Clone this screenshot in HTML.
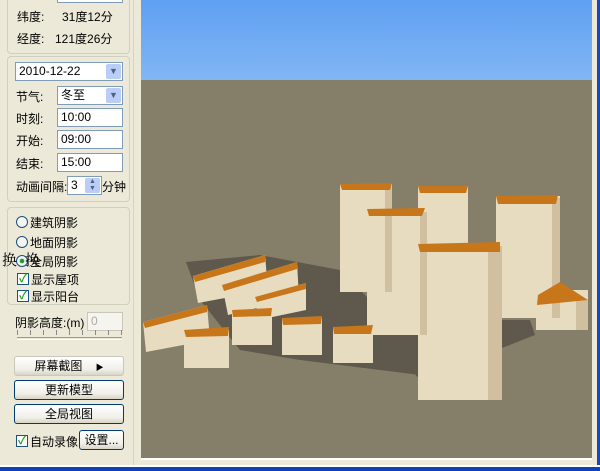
<!DOCTYPE html>
<html><head><meta charset="utf-8"><style>
*{margin:0;padding:0;box-sizing:border-box}
body{width:600px;height:471px;overflow:hidden;background:#ece9d8;position:relative;font-family:"Liberation Sans","Noto Sans CJK SC",sans-serif;font-size:12px;color:#000}
.a{position:absolute}
.grp{position:absolute;border:1px solid #d0d0bf;border-radius:4px}
.inp{position:absolute;background:#fff;border:1px solid #7f9db9;height:19px;font-size:12px;line-height:17px;padding-left:3px}
.dd{position:absolute;right:1px;top:1px;width:15px;height:15px;background:#b9cdf6;border-radius:2px;color:#4d6185;font-size:9px;text-align:center;line-height:15px}
.btn{position:absolute;left:14px;width:110px;height:20px;border:1px solid #003c74;border-radius:3px;background:linear-gradient(#fff,#f0efe8 70%,#d8d5c6);text-align:center;line-height:18px;font-size:12px}
.rb{position:absolute;width:12px;height:12px;border:1px solid #1c5180;border-radius:50%;background:#f4f4f0}
.cb{position:absolute;width:12px;height:12px;border:1px solid #1c5180;background:#fff;color:#21a121;font-size:11px;line-height:10px;text-align:center;font-weight:bold}
</style></head><body>
<div class="a" style="left:133px;top:0;width:467px;height:471px;background:#ece9d8"></div>
<div class="grp" style="left:7px;top:-5px;width:123px;height:59px"></div>
<div class="inp" style="left:57px;top:-12px;width:66px;height:15px"></div>
<div class="a" style="left:17px;top:8px">纬度:</div><div class="a" style="left:62px;top:8px">31度12分</div>
<div class="a" style="left:17px;top:30px">经度:</div><div class="a" style="left:55px;top:30px">121度26分</div>
<div class="grp" style="left:7px;top:56px;width:123px;height:146px"></div>
<div class="inp" style="left:15px;top:62px;width:108px">2010-12-22<div class="dd">&#9660;</div></div>
<div class="a" style="left:16px;top:88px">节气:</div>
<div class="inp" style="left:57px;top:86px;width:66px">冬至<div class="dd">&#9660;</div></div>
<div class="a" style="left:16px;top:110px">时刻:</div><div class="inp" style="left:57px;top:108px;width:66px">10:00</div>
<div class="a" style="left:16px;top:132px">开始:</div><div class="inp" style="left:57px;top:130px;width:66px">09:00</div>
<div class="a" style="left:16px;top:155px">结束:</div><div class="inp" style="left:57px;top:153px;width:66px">15:00</div>
<div class="a" style="left:16px;top:178px">动画间隔:</div>
<div class="inp" style="left:67px;top:176px;width:35px">3<div class="dd" style="height:15px;font-size:7px;line-height:7px">▲<br>▼</div></div>
<div class="a" style="left:102px;top:178px">分钟</div>
<div class="grp" style="left:7px;top:207px;width:123px;height:98px"></div>
<div class="rb" style="left:16px;top:216px"></div><div class="a" style="left:30px;top:214px">建筑阴影</div>
<div class="rb" style="left:16px;top:236px"></div><div class="a" style="left:30px;top:234px">地面阴影</div>
<div class="rb" style="left:16px;top:255px;background:radial-gradient(#2a9a2a 30%,#f4f4f0 35%)"></div><div class="a" style="left:30px;top:253px">全局阴影</div>
<div class="a" style="left:2px;top:249px;font-family:'Noto Serif CJK SC',serif;font-size:15px;background:transparent">换<span style="margin-left:8px">换</span></div>
<div class="cb" style="left:17px;top:273px">✓</div><div class="a" style="left:31px;top:271px">显示屋项</div>
<div class="cb" style="left:17px;top:290px">✓</div><div class="a" style="left:31px;top:288px">显示阳台</div>
<div class="a" style="left:15px;top:314px">阴影高度:(m)</div>
<div class="inp" style="left:87px;top:312px;width:36px;border-color:#c9c7ba;color:#aaa;background:#f5f4ef">0</div>
<div class="a" style="left:17px;top:337px;width:105px;height:3px;border-top:1px solid #999;border-bottom:1px solid #fff"></div>
<div class="a" style="left:17px;top:330px;width:105px;height:5px;background:repeating-linear-gradient(90deg,#888 0 1px,transparent 1px 13px)"></div>
<div class="btn" style="top:356px;border-color:#c9c7ba">屏幕截图 &nbsp; &nbsp;<span style="font-size:8px">▶</span></div>
<div class="btn" style="top:380px">更新模型</div>
<div class="btn" style="top:404px">全局视图</div>
<div class="cb" style="left:16px;top:435px">✓</div><div class="a" style="left:30px;top:433px">自动录像</div>
<div class="btn" style="left:79px;top:430px;width:45px">设置...</div>
<div class="a" style="left:4px;top:0;width:130px;height:465px;border-right:1px solid #d6d3c2"></div>
<div class="a" style="left:0;top:465px;width:600px;height:6px;background:#1240b8;border-top:2px solid #fff"></div>
<div class="a" style="left:597px;top:0;width:3px;height:465px;background:#1a48b8"></div>
<svg class="a" style="left:141px;top:0" width="451" height="460" viewBox="141 0 451 460">
<defs><linearGradient id="s" x1="0" y1="0" x2="0" y2="1"><stop offset="0" stop-color="#5fa0f2"/><stop offset="1" stop-color="#82b6f4"/></linearGradient></defs>
<rect x="141" y="0" width="451" height="81" fill="url(#s)"/>
<rect x="141" y="80" width="451" height="380" fill="#857e69"/>
<g fill="#5e594c">
<polygon points="186,262 260,255 340,270 370,300 500,320 520,330 510,345 420,375 300,360 240,350 200,300"/>
<polygon points="370,320 530,320 535,335 420,380"/>
</g>
<g fill="#e8dcc0">
<rect x="340" y="184" width="52" height="108"/><rect x="418" y="186" width="50" height="60"/>
<rect x="496" y="196" width="64" height="122"/><rect x="367" y="210" width="60" height="125"/>
<rect x="418" y="244" width="84" height="156"/><rect x="536" y="290" width="52" height="40"/>
<polygon points="193,276 265,255 268,290 198,303"/><polygon points="222,285 297,262 299,298 228,315"/>
<polygon points="255,297 306,283 306,310 258,320"/><polygon points="143,322 207,305 210,340 146,352"/>
<rect x="184" y="330" width="45" height="38"/><rect x="232" y="310" width="40" height="35"/>
<rect x="282" y="318" width="40" height="37"/><rect x="333" y="327" width="40" height="36"/>
</g>
<g fill="#d0c0a0"><rect x="385" y="186" width="7" height="106"/><rect x="420" y="212" width="7" height="123"/><rect x="552" y="198" width="8" height="120"/><rect x="488" y="246" width="14" height="154"/><rect x="576" y="300" width="12" height="30"/></g>
<g fill="#c8761a">
<polygon points="340,184 392,183 390,190 342,190"/><polygon points="418,186 468,186 466,193 420,193"/>
<polygon points="496,196 558,195 556,204 498,204"/><polygon points="367,209 425,208 422,216 369,216"/>
<polygon points="418,244 500,242 500,252 420,252"/><polygon points="538,295 560,282 588,300 537,305"/>
<polygon points="193,276 265,255 265,262 195,282"/><polygon points="222,285 297,262 297,269 224,291"/>
<polygon points="255,297 306,283 306,289 257,302"/><polygon points="143,322 207,305 207,312 145,328"/>
<polygon points="184,330 229,327 228,336 186,337"/><polygon points="232,310 272,308 271,316 233,317"/>
<polygon points="282,318 322,316 321,324 283,325"/><polygon points="333,327 373,325 371,334 334,334"/>
</g>
<rect x="141" y="458" width="451" height="2" fill="#fff"/>
</svg>
</body></html>
